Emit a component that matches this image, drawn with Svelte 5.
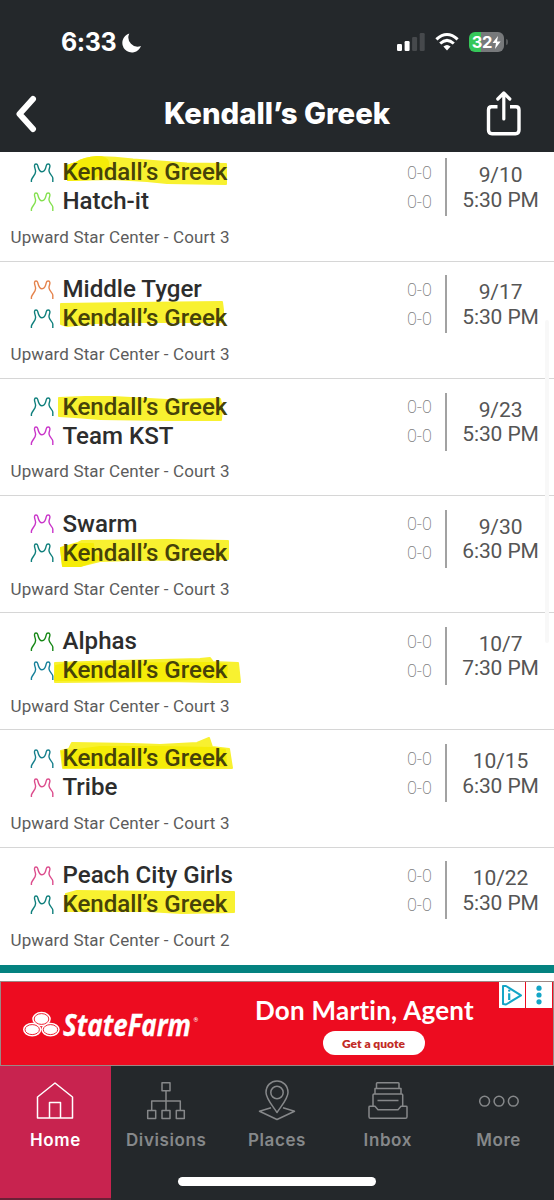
<script>
    const TEAL = '#0f7f7c';

    //MARKER STROKES ARE DRAWN IN PAGE X, AND Y FROM THE TOP OF THE TEAM LINE
    const games = [
        {
            home: { name: 'Kendall’s Greek', color: TEAL, mark: 'M67 8 L76 5 Q84 0 97 -1 Q115 -1 133 1.5 L187 5.5 L226 6 L226 26 L167 25 L147 23 L113 21 L68 22 Z', thick: 'M67 8 L76 5 Q84 0 97 -1 Q107 -1 108 4 L108 10 L92 21 L68 22 Z' },
            away: { name: 'Hatch-it', color: '#84e04f' },
            venue: 'Upward Star Center - Court 3', date: '9/10', time: '5:30 PM'
        },
        {
            home: { name: 'Middle Tyger', color: '#e5834c' },
            away: { name: 'Kendall’s Greek', color: TEAL, mark: 'M61 0 L133 -1 L222 -2 L223 6 L223 18 L133 18 L95 19 L67 22 L61 20 Z' },
            venue: 'Upward Star Center - Court 3', date: '9/17', time: '5:30 PM'
        },
        {
            home: { name: 'Kendall’s Greek', color: TEAL, mark: 'M59 5 L85 4 L113 4 L167 7 L220 6 L222 15 L221 27 L167 27 L100 26 L75 24 L59 23 Z' },
            away: { name: 'Team KST', color: '#c935c9' },
            venue: 'Upward Star Center - Court 3', date: '9/23', time: '5:30 PM'
        },
        {
            home: { name: 'Swarm', color: '#c935c9' },
            away: { name: 'Kendall’s Greek', color: TEAL, mark: 'M61 9 L78 4 L82 2 L167 1 L228 2 L228 20 L133 21 L100 22 L80 27 L63 27 Z', thick: 'M61 9 L78 5 L93 5 L94 14 L100 20 L80 27 L63 27 Z' },
            venue: 'Upward Star Center - Court 3', date: '9/30', time: '6:30 PM'
        },
        {
            home: { name: 'Alphas', color: '#168716' },
            away: { name: 'Kendall’s Greek', color: '#16809a', mark: 'M55 7 L120 5 L200 3 L210 2 L213 6 L238 7 L240 26 L215 26 L167 25 L55 26 Z', thick: 'M65 8 L212 7 L227 9 L226 22 L167 24 L55 24 L56 10 Z' },
            venue: 'Upward Star Center - Court 3', date: '10/7', time: '7:30 PM'
        },
        {
            home: { name: 'Kendall’s Greek', color: '#167f8c', mark: 'M61 7 L69 5 L72 -1 L133 0 L160 1 L197 -1 L209 -6 L212 3 L229 5 L232 24 L150 24 L63 24 Z', thick: 'M62 8 L100 3 L160 3 L212 4 L225 6 L226 22 L150 23 L64 23 Z' },
            away: { name: 'Tribe', color: '#dc4c8c' },
            venue: 'Upward Star Center - Court 3', date: '10/15', time: '6:30 PM'
        },
        {
            home: { name: 'Peach City Girls', color: '#dc4c8c' },
            away: { name: 'Kendall’s Greek', color: TEAL, mark: 'M66 4 L77 1 L167 2 L234 2 L234 22 L182 23 L147 21 L66 21 Z' },
            venue: 'Upward Star Center - Court 2', date: '10/22', time: '5:30 PM'
        }
    ];

    const tabs = ['Home', 'Divisions', 'Places', 'Inbox', 'More'];
    let active = $state('Home');
</script>

<main>
    <header>
        <div class="status">
            <span class="clock">6:33</span>
            <svg class="moon" width="20" height="20" viewBox="0 0 20 20"><path d="M7.3 .6 A9.6 9.6 0 1 0 19 13 A9.2 9.2 0 0 1 7.3 .6Z" fill="#fff" /></svg>
            <svg class="signal" width="28" height="20" viewBox="0 0 28 20">
                <rect x="0" y="12" width="5" height="7" rx="1.2" fill="#fff" />
                <rect x="7.6" y="9" width="5" height="10" rx="1.2" fill="#fff" />
                <rect x="15.1" y="5" width="5" height="14" rx="1.2" fill="#46494c" />
                <rect x="22.7" y="1" width="5" height="18" rx="1.2" fill="#46494c" />
            </svg>
            <svg class="wifi" width="24" height="20" viewBox="0 0 24 20">
                <path d="M1.4 7.4 Q12 -2.4 22.6 7.4" fill="none" stroke="#fff" stroke-width="3.1" />
                <path d="M5.2 11.5 Q12 5.3 18.8 11.5" fill="none" stroke="#fff" stroke-width="3" />
                <path d="M8.4 14.5 Q12 11.4 15.6 14.5 L12 18.6Z" fill="#fff" />
            </svg>
            <div class="battery">
                <span>32</span>
                <svg width="9" height="13" viewBox="0 0 9 13"><path d="M6 0 L.5 7 H4 L3 13 L8.6 5.6 H5Z" fill="#fff" /></svg>
            </div>
        </div>
        <div class="title-bar">
            <svg width="24" height="38" viewBox="0 0 24 38"><path d="M20 4 L6.5 19 L20 34" fill="none" stroke="#fff" stroke-width="6" stroke-linecap="round" stroke-linejoin="round" /></svg>
            <h1>Kendall’s Greek</h1>
            <svg width="36" height="47" viewBox="0 0 36 47" fill="none" stroke="#fff" stroke-width="3.4" stroke-linecap="round" stroke-linejoin="round">
                <path d="M11.5 16.8 H5.5 Q2.5 16.8 2.5 20 V40 Q2.5 43.7 6 43.7 H29.5 Q33 43.7 33 40 V20 Q33 16.8 30 16.8 H24" stroke-linecap="butt" />
                <path d="M17.8 29 V3.5 M11.8 9 L17.8 3 L23.8 9" stroke-width="3.2" />
            </svg>
        </div>
    </header>

    {#snippet teamLine(team)}
        <div class="team">
            {#if team.mark}
                <svg class="marker" width="260" height="29" viewBox="0 0 260 29">
                    <path d={team.mark} />
                    {#if team.thick}<path class="thick" d={team.thick} />{/if}
                </svg>
            {/if}
            <svg class="jersey" width="24" height="20" viewBox="0 0 24 20">
                <path d="M1.4 19 V17 C2.3 13.6 5.6 12 5.6 8.5 C5.6 6 4.3 5 4.5 2.5 C4.7 .6 7.2 .6 7.7 2.4 C8.5 5.5 9 8.8 12 8.8 C15 8.8 15.7 5.5 16.3 2.6 C16.8 .6 19.6 .5 19.9 2.5 C20.2 4.5 18.8 5.5 19 8 C19.3 11 22.8 13 22.8 15 V19" stroke={team.color} />
            </svg>
            <span class="name" class:marked={team.mark}>{team.name}</span>
            <span class="score">0-0</span>
        </div>
    {/snippet}

    <section class="schedule">
        <div class="games">
            {#each games as game}
                <article>
                    <div class="matchup">
                        <div class="teams">
                            {@render teamLine(game.home)}
                            {@render teamLine(game.away)}
                        </div>
                        <div class="when">
                            <span>{game.date}</span>
                            <span class="time">{game.time}</span>
                        </div>
                    </div>
                    <p>{game.venue}</p>
                </article>
            {/each}
        </div>
        <div class="thumb"></div>
    </section>
    <div class="band"></div>

    <aside>
        <svg class="logo" width="37" height="34" viewBox="0 0 37 34">
            <g fill="#fff">
                <ellipse cx="18.5" cy="8" rx="9.3" ry="7.2" />
                <ellipse cx="9.2" cy="18.6" rx="9.2" ry="6.8" />
                <ellipse cx="27.5" cy="18.6" rx="9.2" ry="6.8" />
            </g>
            <g fill="#fff" stroke="#ed0c20" stroke-width=".9">
                <ellipse cx="18.5" cy="8" rx="7.3" ry="5.4" />
                <ellipse cx="9.2" cy="18.6" rx="7.2" ry="5" />
                <ellipse cx="27.5" cy="18.6" rx="7.2" ry="5" />
            </g>
        </svg>
        <svg class="wordmark" width="132" height="50" viewBox="0 0 132 50">
            <text x="1" y="35" textLength="128" lengthAdjust="spacingAndGlyphs">StateFarm</text>
        </svg>
        <span class="reg">®</span>
        <div class="pitch">
            <strong>Don Martin, Agent</strong>
            <button>Get a quote</button>
        </div>
        <div class="choices">
            <svg width="26" height="26" viewBox="0 0 26 26" fill="none" stroke="#14a5c6">
                <path d="M4 4 V22 L7 22.5 L22 13.4 L7 4Z" stroke-width="2" stroke-linejoin="round" />
                <path d="M10.2 11.3 V18" stroke-width="2.2" /><circle cx="10.2" cy="8.6" r="1.2" fill="#14a5c6" stroke="none" />
            </svg>
            <svg width="26" height="26" viewBox="0 0 26 26" fill="#14a5c6"><circle cx="13" cy="6.2" r="2.6" /><circle cx="13" cy="13" r="2.6" /><circle cx="13" cy="19.8" r="2.6" /></svg>
        </div>
    </aside>

    <nav>
        {#each tabs as tab}
            <button class="tab" class:active={active === tab} onclick={() => active = tab}>
                <svg width="44" height="44" viewBox="0 0 44 44">
                    {#if tab === 'Home'}
                        <path d="M4.5 40 V19 L22 5 L39.5 19 V40Z M16.5 40 V24.5 H27.5 V40" />
                    {:else if tab === 'Divisions'}
                        <path d="M18 4.7 H26 V12.7 H18Z M22 13 V32.5 M7.7 32.5 V23 H36.3 V32.5 M3.7 32.5 H11.7 V40.5 H3.7Z M18 32.5 H26 V40.5 H18Z M32.3 32.5 H40.3 V40.5 H32.3Z" />
                    {:else if tab === 'Places'}
                        <path d="M22 34.5 C17 27 11 20.5 11 14.5 C11 7.5 16 3 22 3 C28 3 33 7.5 33 14.5 C33 20.5 27 27 22 34.5Z" />
                        <circle cx="22" cy="14.5" r="6.2" />
                        <path d="M16 29.7 L4.5 33.3 L22 41.5 L39.5 33.3 L28 29.7" />
                    {:else if tab === 'Inbox'}
                        <path d="M10.5 10.5 V5.5 Q10.5 4.7 11.3 4.7 H32.2 Q33 4.7 33 5.5 V10.5 M9 16 V10.5 H35 V16 M7 28 V17 Q7 16 8 16 H35.7 Q36.7 16 36.7 17 V28 M11.5 22.5 H32.5 M3 29 Q3 28.3 4 28.3 H9 L12 31.7 H32 L35 28.3 H40 Q41 28.3 41 29 V38.7 Q41 40.3 39.5 40.3 H4.5 Q3 40.3 3 38.7Z" />
                    {:else}
                        <circle cx="7.6" cy="23.2" r="4.9" /><circle cx="22" cy="23.2" r="4.9" /><circle cx="36.3" cy="23.2" r="4.9" />
                    {/if}
                </svg>
                <span>{tab}</span>
            </button>
        {/each}
        <div class="home-bar"></div>
    </nav>
</main>

<style>
    :global(body) {
        background: #fff;
    }

    main {
        width: 554px;
        height: 1200px;
        display: flex;
        flex-direction: column;
        overflow: hidden;
        font-family: Roboto, "Liberation Sans", sans-serif;
    }

    header {
        height: 152px;
        flex: none;
        background: #24282b;
        color: #fff;
    }

    .status {
        display: flex;
        align-items: center;
        height: 82px;
        padding: 2px 50px 0 61px;
        box-sizing: border-box;
    }

    .clock {
        width: 61px;
        font: 700 25px/30px Inter, sans-serif;
        letter-spacing: -0.4px;
        white-space: nowrap;
    }

    .moon {
        margin-top: 1px;
    }

    .signal {
        margin-left: auto;
    }

    .wifi {
        margin: 0 10px 0 10px;
    }

    .battery {
        position: relative;
        display: flex;
        align-items: center;
        justify-content: center;
        width: 35px;
        height: 20px;
        border-radius: 6px;
        background: linear-gradient(90deg, #35c759 12px, #77797b 12px);
        font: 700 16.5px/20px Inter, sans-serif;
        letter-spacing: -0.3px;
    }

    .battery::after {
        content: "";
        position: absolute;
        right: -4px;
        top: 7px;
        width: 2px;
        height: 6px;
        border-radius: 0 2px 2px 0;
        background: #55585a;
    }

    .title-bar {
        display: flex;
        align-items: center;
        justify-content: space-between;
        height: 63px;
        padding: 0 32px 0 13px;
    }

    h1 {
        margin: 0 0 0 31px;
        font: 800 29.3px/40px Inter, sans-serif;
        white-space: nowrap;
    }

    .schedule {
        position: relative;
        height: 812.5px;
        flex: none;
        overflow: hidden;
    }

    .games {
        margin-top: -7.6px;
    }

    article {
        height: 117.2px;
        box-sizing: border-box;
        padding-top: 13.9px;
        border-bottom: 1px solid #d6d6d6;
    }

    article:last-child {
        border-bottom: none;
    }

    .matchup {
        display: flex;
    }

    .teams {
        width: 445px;
        border-right: 2px solid #a2a2a2;
    }

    .team {
        position: relative;
        display: flex;
        align-items: center;
        height: 29px;
        padding: 0 13px 0 30px;
    }

    .marker {
        position: absolute;
        left: 0;
        top: 0;
        overflow: visible;
    }

    .marker path {
        fill: #f8f130;
        stroke: #f8f130;
        stroke-width: 2;
        stroke-linejoin: round;
    }

    .marker .thick {
        fill: #f5ec08;
        stroke: #f5ec08;
    }

    .jersey {
        position: relative;
        fill: none;
        stroke-width: 1.4;
    }

    .name {
        position: relative;
        flex: 1;
        margin-left: 8.5px;
        color: #2d2d2d;
        font-size: 24.1px;
        font-weight: 500;
        line-height: 29px;
    }

    .marked {
        color: #464209;
    }

    .score {
        margin-top: -1px;
        color: #808080;
        font-size: 18px;
        font-weight: 200;
    }

    .when {
        flex: 1;
        padding-top: 5px;
        text-align: center;
        color: #555;
        font-size: 21px;
        line-height: 24.4px;
        letter-spacing: -0.1px;
    }

    .when span {
        display: block;
    }

    p {
        margin: 10.7px 0 0 10.5px;
        color: #5c5c5c;
        font-size: 17px;
        line-height: 21px;
        letter-spacing: 0.13px;
    }

    .thumb {
        position: absolute;
        right: 5px;
        top: 168px;
        width: 4px;
        height: 323px;
        border-radius: 2px;
        background: #f8f8f8;
    }

    .band {
        height: 8.5px;
        flex: none;
        background: #048280;
    }

    aside {
        position: relative;
        display: flex;
        height: 85px;
        box-sizing: border-box;
        margin-top: 8px;
        flex: none;
        border: 1.5px solid #9c8885;
        background: #ed0c20;
    }

    .logo {
        margin: 29px 0 0 21.5px;
    }

    .wordmark {
        margin: 18.5px 0 0 2px;
        overflow: visible;
        fill: #fff;
        stroke: #fff;
        stroke-width: 0.3;
        font: italic 700 30px "Open Sans", sans-serif;
    }

    .reg {
        width: 6px;
        margin-top: 34px;
        color: #fff;
        font-size: 6px;
    }

    .pitch {
        width: 222px;
        margin-left: 54px;
        text-align: center;
        color: #fff;
    }

    strong {
        display: block;
        margin-top: 13px;
        font: 700 26px/31px Lato, sans-serif;
        letter-spacing: 0.25px;
        white-space: nowrap;
    }

    .pitch button {
        width: 102px;
        height: 24px;
        margin: 5px 0 0 18px;
        padding: 0;
        border: none;
        border-radius: 12px;
        background: #fff;
        color: #c22b25;
        font: 800 12px Lato, sans-serif;
    }

    .choices {
        position: absolute;
        top: 0;
        right: 1px;
        display: flex;
        gap: 1px;
    }

    .choices svg {
        background: #fff;
    }

    nav {
        position: relative;
        display: flex;
        flex: 1;
        background: #24282b;
    }

    .tab {
        display: flex;
        flex-direction: column;
        align-items: center;
        width: 20%;
        padding: 12px 0 0;
        border: none;
        background: none;
        color: #86888a;
        font: 600 17px/20px Inter, sans-serif;
        letter-spacing: 0.6px;
        cursor: pointer;
    }

    .tab svg {
        margin-bottom: 7.5px;
        fill: none;
        stroke: currentColor;
        stroke-width: 1.5;
        stroke-linejoin: round;
    }

    .tab.active {
        background: #c8234f;
        border-bottom: 2px solid #6b2036;
        color: #fff;
    }

    .home-bar {
        position: absolute;
        left: 178px;
        bottom: 14px;
        width: 198px;
        height: 9px;
        border-radius: 5px;
        background: #fff;
    }
</style>
